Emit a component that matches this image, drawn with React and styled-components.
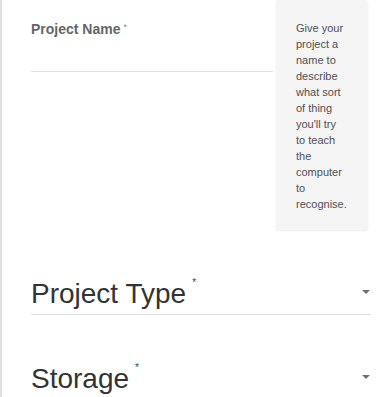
import React from "react";
import styled, { createGlobalStyle } from "styled-components";

const Global = createGlobalStyle`
  html, body { margin: 0; padding: 0; background: #fff; }
  body { font-family: "Liberation Sans", Arial, sans-serif; }
`;

const Page = styled.div`
  box-sizing: border-box;
  width: 376px;
  height: 397px;
  overflow: hidden;
  border-left: 2px solid #e0e0e0;
  padding: 0 5px 0 29px;
`;

const TopRow = styled.div`
  display: flex;
  align-items: flex-start;
`;

const NameField = styled.div`
  flex: 1;
  padding-top: 21px;
  margin-right: 3px;
`;

const SmallLabel = styled.div`
  font-size: 14px;
  line-height: 16px;
  font-weight: bold;
  color: #666;
`;

const Star = styled.span`
  font-size: ${(p) => (p.$big ? "10px" : "9px")};
  font-weight: normal;
  color: ${(p) => (p.$big ? "#444" : "#888")};
  vertical-align: top;
  margin-left: ${(p) => (p.$big ? "6px" : "3px")};
  position: relative;
  top: ${(p) => (p.$big ? "0" : "1px")};
  line-height: 10px;
`;

const InputLine = styled.div`
  height: 34px;
  border-bottom: 1px solid #e0e0e0;
`;

const Tip = styled.div`
  box-sizing: border-box;
  width: 92px;
  padding: 20px 20px 18px;
  margin-right: 3px;
  background: #f5f5f6;
  border-radius: 3px;
  box-shadow: 0 1px 2px rgba(0, 0, 0, 0.08);
  font-size: 11px;
  line-height: 16px;
  color: #505050;
`;

const SelectField = styled.div`
  display: flex;
  justify-content: space-between;
  align-items: flex-start;
  margin-top: 48px;
  padding-bottom: 4px;
  border-bottom: 1px solid #e0e0e0;
`;

const BigLabel = styled.div`
  font-size: 28px;
  line-height: 32px;
  color: #333;
`;

const Caret = styled.span`
  width: 0;
  height: 0;
  margin: 12px 1px 0 0;
  border-left: 4px solid transparent;
  border-right: 4px solid transparent;
  border-top: 4px solid #707070;
`;

export default function App() {
  return (
    <>
      <Global />
      <Page>
        <TopRow>
          <NameField>
            <SmallLabel>
              Project Name<Star>*</Star>
            </SmallLabel>
            <InputLine />
          </NameField>
          <Tip>
            Give your project a name to describe what sort of thing you'll try
            to teach the computer to recognise.
          </Tip>
        </TopRow>
        <SelectField>
          <BigLabel>
            Project Type<Star $big>*</Star>
          </BigLabel>
          <Caret />
        </SelectField>
        <SelectField>
          <BigLabel>
            Storage<Star $big>*</Star>
          </BigLabel>
          <Caret />
        </SelectField>
      </Page>
    </>
  );
}
